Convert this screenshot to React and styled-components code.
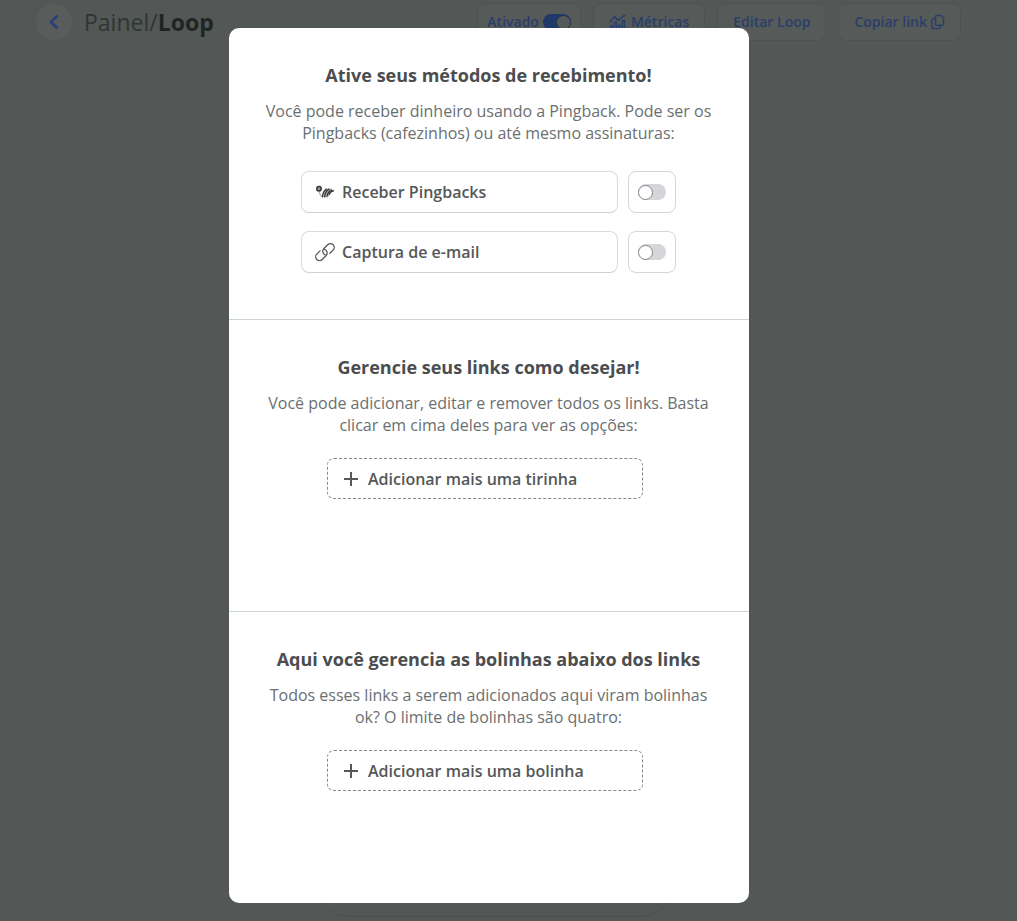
import React, { useState } from "react";
import styled, { createGlobalStyle } from "styled-components";

const GlobalStyle = createGlobalStyle`
  *, *::before, *::after { box-sizing: border-box; }
  body {
    margin: 0;
    background: #535856;
    font-family: "Open Sans", "Noto Sans", sans-serif;
    font-size: 16px;
    color: #4b4d4e;
  }
  button { font: inherit; cursor: pointer; }
`;

const Page = styled.div`
  position: relative;
  display: flex;
  flex-direction: column;
  min-height: 100vh;
  overflow: hidden;
`;

const Header = styled.header`
  display: flex;
  align-items: center;
  justify-content: space-between;
  padding: 3px 56px 0 36px;
`;

const Group = styled.div`
  display: flex;
  align-items: center;
  gap: 12px;
`;

const BackButton = styled.button`
  display: grid;
  place-items: center;
  width: 36px;
  height: 36px;
  padding: 0;
  border: 0;
  border-radius: 50%;
  background: #585d5b;
  color: #2a3d7c;
`;

const Crumb = styled.h1`
  margin: 0;
  font-size: 23px;
  font-weight: 400;
  line-height: 30px;
  color: #303534;
  strong { font-weight: 700; color: #202524; }
`;

const HeaderAction = styled.button`
  display: flex;
  align-items: center;
  gap: 4px;
  height: 38px;
  padding: 0 15px;
  border: 1px solid #4d5351;
  border-radius: 8px;
  background: #565b59;
  color: #2a3e6a;
  font-size: 14px;
  font-weight: 600;
  line-height: 20px;
  white-space: nowrap;
`;

const StatusBox = styled(HeaderAction).attrs({ as: "label" })`
  padding: 0 9px;
  cursor: pointer;
`;

const Switch = styled.input.attrs({ type: "checkbox", role: "switch" })`
  appearance: none;
  display: flex;
  align-items: center;
  width: 28px;
  height: 16px;
  margin: 0;
  border-radius: 8px;
  background: ${(p) => (p.$dim ? "#40464a" : "#d5d6da")};
  cursor: pointer;
  &::before {
    content: "";
    width: 15px;
    height: 15px;
    border: 1px solid ${(p) => (p.$dim ? "#233450" : "#85878a")};
    border-radius: 50%;
    background: ${(p) => (p.$dim ? "#565b59" : "#fff")};
  }
  &:checked {
    justify-content: flex-end;
    background: ${(p) => (p.$dim ? "#20396b" : "#3467d6")};
  }
`;

const Preview = styled.div`
  width: 350px;
  flex: 1;
  margin: 24px 0 4px;
  align-self: center;
  position: relative;
  right: 14px;
  border-bottom: 1px solid #4b504e;
  border-radius: 28px;
`;

const Overlay = styled.div`
  position: absolute;
  inset: 0;
  display: flex;
  justify-content: center;
  align-items: flex-start;
  padding: 28px 39px 18px 0;
  pointer-events: none;
`;

const Modal = styled.main`
  width: 520px;
  max-width: 100%;
  border-radius: 10px;
  background: #fff;
  overflow: hidden;
  pointer-events: auto;
`;

const Section = styled.section`
  display: flex;
  flex-direction: column;
  align-items: center;
  min-height: 292px;
  padding: 35px 33px 32px 32px;
  &:not(:last-child) { border-bottom: 1px solid #d0d2d2; }
  &:last-child { min-height: 291px; }
`;

const Title = styled.h2`
  margin: 0 0 13px;
  font-size: 18px;
  font-weight: 700;
  line-height: 24px;
  text-align: center;
`;

const Description = styled.p`
  margin: 0 0 22px;
  max-width: 456px;
  line-height: 22px;
  text-align: center;
  color: #6b6f70;
`;

const OptionList = styled.div`
  display: flex;
  flex-direction: column;
  gap: 18px;
  width: 100%;
  max-width: 375px;
  padding-top: 5px;
`;

const OptionRow = styled.div`
  display: flex;
  gap: 10px;
`;

const OptionLabel = styled.label`
  display: flex;
  flex: 1;
  align-items: center;
  gap: 7px;
  height: 42px;
  padding: 0 13px;
  border: 1px solid #dadbdc;
  border-bottom-color: #cfd0d1;
  border-radius: 8px;
  font-weight: 600;
  color: #555758;
`;

const SwitchBox = styled.div`
  display: grid;
  place-items: center;
  width: 48px;
  height: 42px;
  border: 1px solid #d4d5d6;
  border-radius: 8px;
`;

const AddButton = styled.button`
  display: flex;
  align-items: center;
  gap: 9px;
  width: 316px;
  height: 41px;
  margin-right: 7px;
  padding: 0 15px;
  border: 1px dashed #85888a;
  border-radius: 7px;
  background: #fff;
  color: #555758;
  font-weight: 600;
`;

const BackIcon = () => (
  <svg width="16" height="18" viewBox="0 0 16 18" fill="none" stroke="currentColor" strokeWidth="2.6" aria-hidden="true">
    <path d="M11.5 2.5 5 9l6.5 6.5" />
  </svg>
);

const MetricsIcon = () => (
  <svg width="18" height="17" viewBox="0 0 18 17" fill="none" stroke="currentColor" strokeWidth="1.4" aria-hidden="true">
    <path d="M1 7.5 5.5 3l3.5 3L15 1.5" />
    <path d="M1.5 17v-5h2v5M5.5 17V8.500h2V17M9.500 17v-5.500h2V17M13.500 17V6.500h2V17" />
    <circle cx="1.4" cy="7.4" r="1" fill="currentColor" stroke="none" />
    <circle cx="5.5" cy="3" r="1.2" fill="currentColor" stroke="none" />
    <circle cx="9" cy="6" r="1.2" fill="currentColor" stroke="none" />
    <circle cx="15.2" cy="1.6" r="1.2" fill="currentColor" stroke="none" />
  </svg>
);

const CopyIcon = () => (
  <svg width="14" height="16" viewBox="0 0 14 16" fill="none" stroke="currentColor" strokeWidth="1.5" strokeLinejoin="round" aria-hidden="true">
    <path d="M5.500 1.500h4.700l2.300 2.300v6.500a1 1 0 0 1-1 1h-6a1 1 0 0 1-1-1v-7.800a1 1 0 0 1 1-1Z" />
    <path d="M4.500 4.500H2a1 1 0 0 0-1 1v8a1 1 0 0 0 1 1h6a1 1 0 0 0 1-1v-2" />
  </svg>
);

const PingbackIcon = () => (
  <svg width="20" height="20" viewBox="0 0 20 20" fill="none" stroke="#333" aria-hidden="true">
    <path d="M7.200 15.200c0-4 1.600-7.500 5-8.800h3c2 .8 3.200 1.400 3.800 2.600-2.600.3-4 2-4.600 4.600l-1.800 1.800Z" fill="#b5b5b5" stroke="none" />
    <circle cx="4" cy="6.800" r="2.200" fill="#999" strokeWidth="1.500" />
    <path d="M7.400 15.200c.2-3.800 1.500-6.700 4.300-8.500M9.600 15.200c.3-3.900 1.800-6.800 4.800-8.300M11.900 14.600c.5-3.400 2-5.700 4.900-6.900M14 12.800c.8-2.300 2.200-3.700 4.900-4.200" strokeWidth="1.200" />
    <path d="M4.200 10.200c.6 1.900 1.400 3.500 2.800 4.900" strokeWidth=".8" stroke="#777" />
  </svg>
);

const ChainIcon = () => (
  <svg width="20" height="20" viewBox="0 0 20 20" fill="none" stroke="currentColor" strokeWidth="1.300" strokeLinecap="round" aria-hidden="true">
    <path d="M10.200 12.900a3.900 3.900 0 0 1-1.500-6.200l4-4a3.800 3.800 0 0 1 5.400 5.400l-3.200 3.200" />
    <path d="M9.600 7.300a3.900 3.900 0 0 1 1.600 6.200l-4 4a3.800 3.800 0 0 1-5.400-5.400l3.200-3.200" />
  </svg>
);

const PlusIcon = () => (
  <svg width="16" height="16" viewBox="0 0 16 16" stroke="currentColor" strokeWidth="2" aria-hidden="true">
    <path d="M8 1v14M1 8h14" />
  </svg>
);

function Option({ id, icon, children }) {
  const [on, setOn] = useState(false);
  return (
    <OptionRow>
      <OptionLabel htmlFor={id}>{icon}{children}</OptionLabel>
      <SwitchBox>
        <Switch id={id} checked={on} onChange={(e) => setOn(e.target.checked)} />
      </SwitchBox>
    </OptionRow>
  );
}

export default function App() {
  return (
    <>
      <GlobalStyle />
      <Page>
        <Header>
          <Group>
            <BackButton aria-label="Voltar"><BackIcon /></BackButton>
            <Crumb>Painel/<strong>Loop</strong></Crumb>
          </Group>
          <Group>
            <StatusBox>
              Ativado
              <Switch $dim defaultChecked />
            </StatusBox>
            <HeaderAction><MetricsIcon />Métricas</HeaderAction>
            <HeaderAction>Editar Loop</HeaderAction>
            <HeaderAction>Copiar link<CopyIcon /></HeaderAction>
          </Group>
        </Header>
        <Preview />
        <Overlay>
          <Modal>
            <Section>
              <Title>Ative seus métodos de recebimento!</Title>
              <Description>
                Você pode receber dinheiro usando a Pingback. Pode ser os Pingbacks (cafezinhos) ou até mesmo assinaturas:
              </Description>
              <OptionList>
                <Option id="pingbacks" icon={<PingbackIcon />}>Receber Pingbacks</Option>
                <Option id="email" icon={<ChainIcon />}>Captura de e-mail</Option>
              </OptionList>
            </Section>
            <Section>
              <Title>Gerencie seus links como desejar!</Title>
              <Description>
                Você pode adicionar, editar e remover todos os links. Basta clicar em cima deles para ver as opções:
              </Description>
              <AddButton><PlusIcon />Adicionar mais uma tirinha</AddButton>
            </Section>
            <Section>
              <Title>Aqui você gerencia as bolinhas abaixo dos links</Title>
              <Description>
                Todos esses links a serem adicionados aqui viram bolinhas ok? O limite de bolinhas são quatro:
              </Description>
              <AddButton><PlusIcon />Adicionar mais uma bolinha</AddButton>
            </Section>
          </Modal>
        </Overlay>
      </Page>
    </>
  );
}
